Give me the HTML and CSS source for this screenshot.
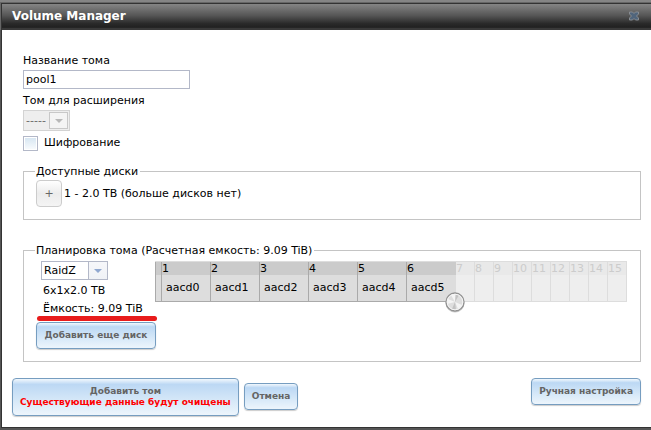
FILE: index.html
```html
<!DOCTYPE html>
<html lang="ru">
<head>
<meta charset="utf-8">
<title>Volume Manager</title>
<link rel="stylesheet" href="styles.css">
</head>
<body>
<main class="dialog">
  <header class="titlebar">
    <h1 class="title">Volume Manager</h1>
    <button class="close" type="button" aria-label="Закрыть">
      <svg width="10" height="10" viewBox="0 0 10 10"><path d="M0.500 1h3L5 2.500 6.500 1h3v2L7.500 5l2 2v2h-3L5 7.500 3.500 9h-3V7l2-2-2-2z" fill="#50657c" stroke="#8c9196" stroke-width="0.900"/></svg>
    </button>
  </header>
  <form class="content">
    <div class="fields">
      <label class="label" for="name">Название тома</label>
      <input class="text" id="name" type="text" value="pool1">
      <label class="label" for="extend">Том для расширения</label>
      <div class="combo combo-disabled">
        <select id="extend" class="select" disabled><option>-----</option></select>
        <span class="arrow"></span>
      </div>
      <div class="check-row">
        <input class="check" id="enc" type="checkbox">
        <label for="enc">Шифрование</label>
      </div>
    </div>

    <fieldset class="group group-disks">
      <legend>Доступные диски</legend>
      <div class="available">
        <button class="plus" type="button">+</button>
        <span>1 - 2.0 TB (больше дисков нет)</span>
      </div>
    </fieldset>

    <fieldset class="group group-layout">
      <legend>Планировка тома (Расчетная емкость: 9.09 TiB)</legend>
      <div class="layout">
        <div class="raid">
          <div class="combo combo-raid">
            <select class="select" aria-label="Тип RAID"><option>RaidZ</option></select>
            <span class="arrow"></span>
          </div>
          <div class="info">6x1x2.0 TB</div>
          <div class="info capacity">Ёмкость: 9.09 TiB</div>
          <button class="button" type="button">Добавить еще диск</button>
        </div>
        <div class="slots">
          <table class="disks">
            <colgroup><col class="c-edge"><col class="c-used" span="6"><col class="c-free" span="9"></colgroup>
            <thead>
              <tr><th></th><th>1</th><th>2</th><th>3</th><th>4</th><th>5</th><th class="end">6</th><th class="free">7</th><th class="free">8</th><th class="free">9</th><th class="free">10</th><th class="free">11</th><th class="free">12</th><th class="free">13</th><th class="free">14</th><th class="free">15</th></tr>
            </thead>
            <tbody>
              <tr><td></td><td>aacd0</td><td>aacd1</td><td>aacd2</td><td>aacd3</td><td>aacd4</td><td class="last">aacd5<span class="handle"><svg width="22" height="22" viewBox="0 0 22 22"><circle cx="11" cy="12" r="9.500" fill="#ccc"/><circle cx="11" cy="11" r="9" fill="#dedede" stroke="#929292" stroke-width="1.300"/><path d="M11 11 7 4a8 8 0 0 1 4-1zM11 11l7 3a8 8 0 0 1-4 4zM11 11 4 8a8 8 0 0 0-1 5z" fill="#f4f4f4"/><path d="M11 11 12 3a8 8 0 0 1 3 1zM11 11 8 18a8 8 0 0 0 4 1z" fill="#c2c2c2"/><circle cx="11" cy="11" r="7.800" fill="none" stroke="#f5f5f5"/></svg></span></td><td class="free"></td><td class="free"></td><td class="free"></td><td class="free"></td><td class="free"></td><td class="free"></td><td class="free"></td><td class="free"></td><td class="free"></td></tr>
            </tbody>
          </table>
        </div>
      </div>
    </fieldset>

    <footer class="actions">
      <button class="button button-main" type="submit"><span>Добавить том</span><span class="warn">Существующие данные будут очищены</span></button>
      <button class="button button-cancel" type="button">Отмена</button>
      <button class="button button-manual" type="button">Ручная настройка</button>
    </footer>
  </form>
</main>
</body>
</html>
```
FILE: styles.css
```css
* { box-sizing: border-box; }

body {
  margin: 0;
  padding: 3px 0 2px 1px;
  background: linear-gradient(#858585 0 2px, #666 2px 30px, #555 30px);
  min-height: 100vh;
  display: flex;
  font: 11px/14px Verdana, "DejaVu Sans", sans-serif;
  color: #000;
}

button, input, select { font: inherit; color: inherit; margin: 0; }

.dialog {
  flex: 1;
  display: flex;
  flex-direction: column;
  background: #fff;
  border: solid #333;
  border-width: 1px 0 1px 1px;
}

.titlebar {
  height: 26px;
  display: flex;
  align-items: center;
  justify-content: space-between;
  padding: 0 12px 2px 10px;
  background: linear-gradient(#858585, #555 45%, #2a2a2a 75%, #202020 90%, #393939 92%);
}

.title {
  margin: 0;
  font: bold 12px/16px Verdana, "DejaVu Sans", sans-serif;
  color: #fff;
}

.close {
  display: flex;
  padding: 0;
  border: 0;
  background: none;
}

.content {
  flex: 1;
  display: flex;
  flex-direction: column;
  padding: 23px 10px 10px;
}

.fields {
  display: flex;
  flex-direction: column;
  align-items: flex-start;
  padding-left: 11px;
}

.label { line-height: 16px; }

.text {
  width: 167px;
  height: 19px;
  padding: 0 2px;
  border: 1px solid #b3b8c8;
  background: #fff;
}

.fields .text { margin: 1px 0 4px; }

.combo {
  display: flex;
  height: 20px;
  border: 1px solid #b3b8c8;
  background: #fff;
}

.select {
  appearance: none;
  flex: 1;
  min-width: 0;
  padding: 0 2px;
  border: 0;
  border-radius: 0;
  background: transparent;
}

.arrow {
  flex: none;
  width: 19px;
  display: grid;
  place-items: center;
  border-left: 1px solid #b3b8c8;
  background: linear-gradient(#f6f7fa, #f0f2f6);
}

.arrow::before {
  content: "";
  border: solid transparent;
  border-width: 4px 4px 0;
  border-top-color: #90a8d0;
}

.combo-disabled {
  width: 47px;
  height: 21px;
  border-color: #d3d3d3;
  background: #eee;
  margin: 1px 0 5px;
}

.combo-disabled .select { color: #6a6a6a; opacity: 1; }

.combo-disabled .arrow {
  width: 19px;
  margin: 1px;
  border: 1px solid #c8c8c8;
  background: #f4f4f4;
}

.combo-disabled .arrow::before { border-top-color: #b8b8b8; }

.check-row {
  display: flex;
  gap: 6px;
}

.check {
  appearance: none;
  width: 15px;
  height: 15px;
  border: 1px solid #b3b8c8;
  background: linear-gradient(#d5e5f1, #fafcfe);
  box-shadow: inset 0 0 0 1px #fff;
}

.group {
  min-width: 0;
  margin: 0 0 0 11px;
  padding: 0 13px 12px 12px;
  border: 1px solid #c4c4c4;
}

.group legend { padding: 2px 2px 0 1px; margin-left: -1px; }

.group-disks { margin-top: 12px; }

.available {
  display: flex;
  align-items: center;
  gap: 2px;
  padding-top: 1px;
}

.plus {
  width: 26px;
  height: 27px;
  padding: 0;
  border: 1px solid #ccc;
  border-radius: 4px;
  background: linear-gradient(#fff, #ececec 50%, #f4f4f4);
  color: #666;
}

.group-layout { margin-top: 22px; }

.layout { display: flex; padding-top: 3px; }

.raid { width: 119px; flex: none; }

.combo-raid {
  width: 67px;
  height: 19px;
  margin-left: 5px;
}

.info { margin: 4px 0 0 7px; }

.capacity { position: relative; }

.capacity::after {
  content: "";
  position: absolute;
  left: -6px;
  right: -2px;
  top: 14px;
  height: 5px;
  border-radius: 3px;
  background: #e81c1c;
}

.slots { flex: none; }

.disks {
  width: 472px;
  table-layout: fixed;
  border-collapse: separate;
  border-spacing: 0;
  border-top: 1px solid #ddd;
}

.c-edge { width: 7px; }
.c-used { width: 49px; }
.c-free { width: 19px; }

.disks th {
  height: 13px;
  padding: 0;
  border-right: 1px solid #aaa;
  background: #cbcbcb;
  font-weight: normal;
  text-align: left;
  line-height: 13px;
}

.disks td {
  height: 27px;
  padding: 0 0 0 4px;
  border: solid #aaa;
  border-width: 0 1px 1px 0;
  background: #ddd;
}

.disks td:first-child, .disks th:first-child { padding: 0; border-left: 1px solid #aaa; }

.disks th.end { border-color: #cbcbcb; }

.disks th.free { border-color: #ddd; background: #e9e9e9; color: #ccc; }
.disks td.free { border-color: #ddd; background: #eee; }

.disks .last { position: relative; border-right-color: #ddd; }

.handle {
  position: absolute;
  right: -11px;
  bottom: -12px;
  height: 22px;
  z-index: 1;
}

.button {
  height: 27px;
  padding: 0 7px;
  border: 1px solid #769dc0;
  border-radius: 4px;
  background: linear-gradient(#f2f8fd 0, #bcd8f4 15%, #d6e8f8 60%, #edf5fc);
  box-shadow: 0 1px 1px rgba(0, 0, 0, 0.200);
  color: #646464;
  font: bold 9px/11px Verdana, "DejaVu Sans", sans-serif;
  white-space: nowrap;
}

.raid .button { width: 120px; margin-top: 6px; padding: 0; }

.actions {
  display: flex;
  align-items: flex-start;
  gap: 5px;
  margin-top: 16px;
}

.button-main {
  height: 38px;
  display: flex;
  flex-direction: column;
  align-items: center;
  justify-content: center;
}

.warn { color: #f00; }

.button-cancel { margin-top: 5px; }

.button-manual { margin-left: auto; }
```
